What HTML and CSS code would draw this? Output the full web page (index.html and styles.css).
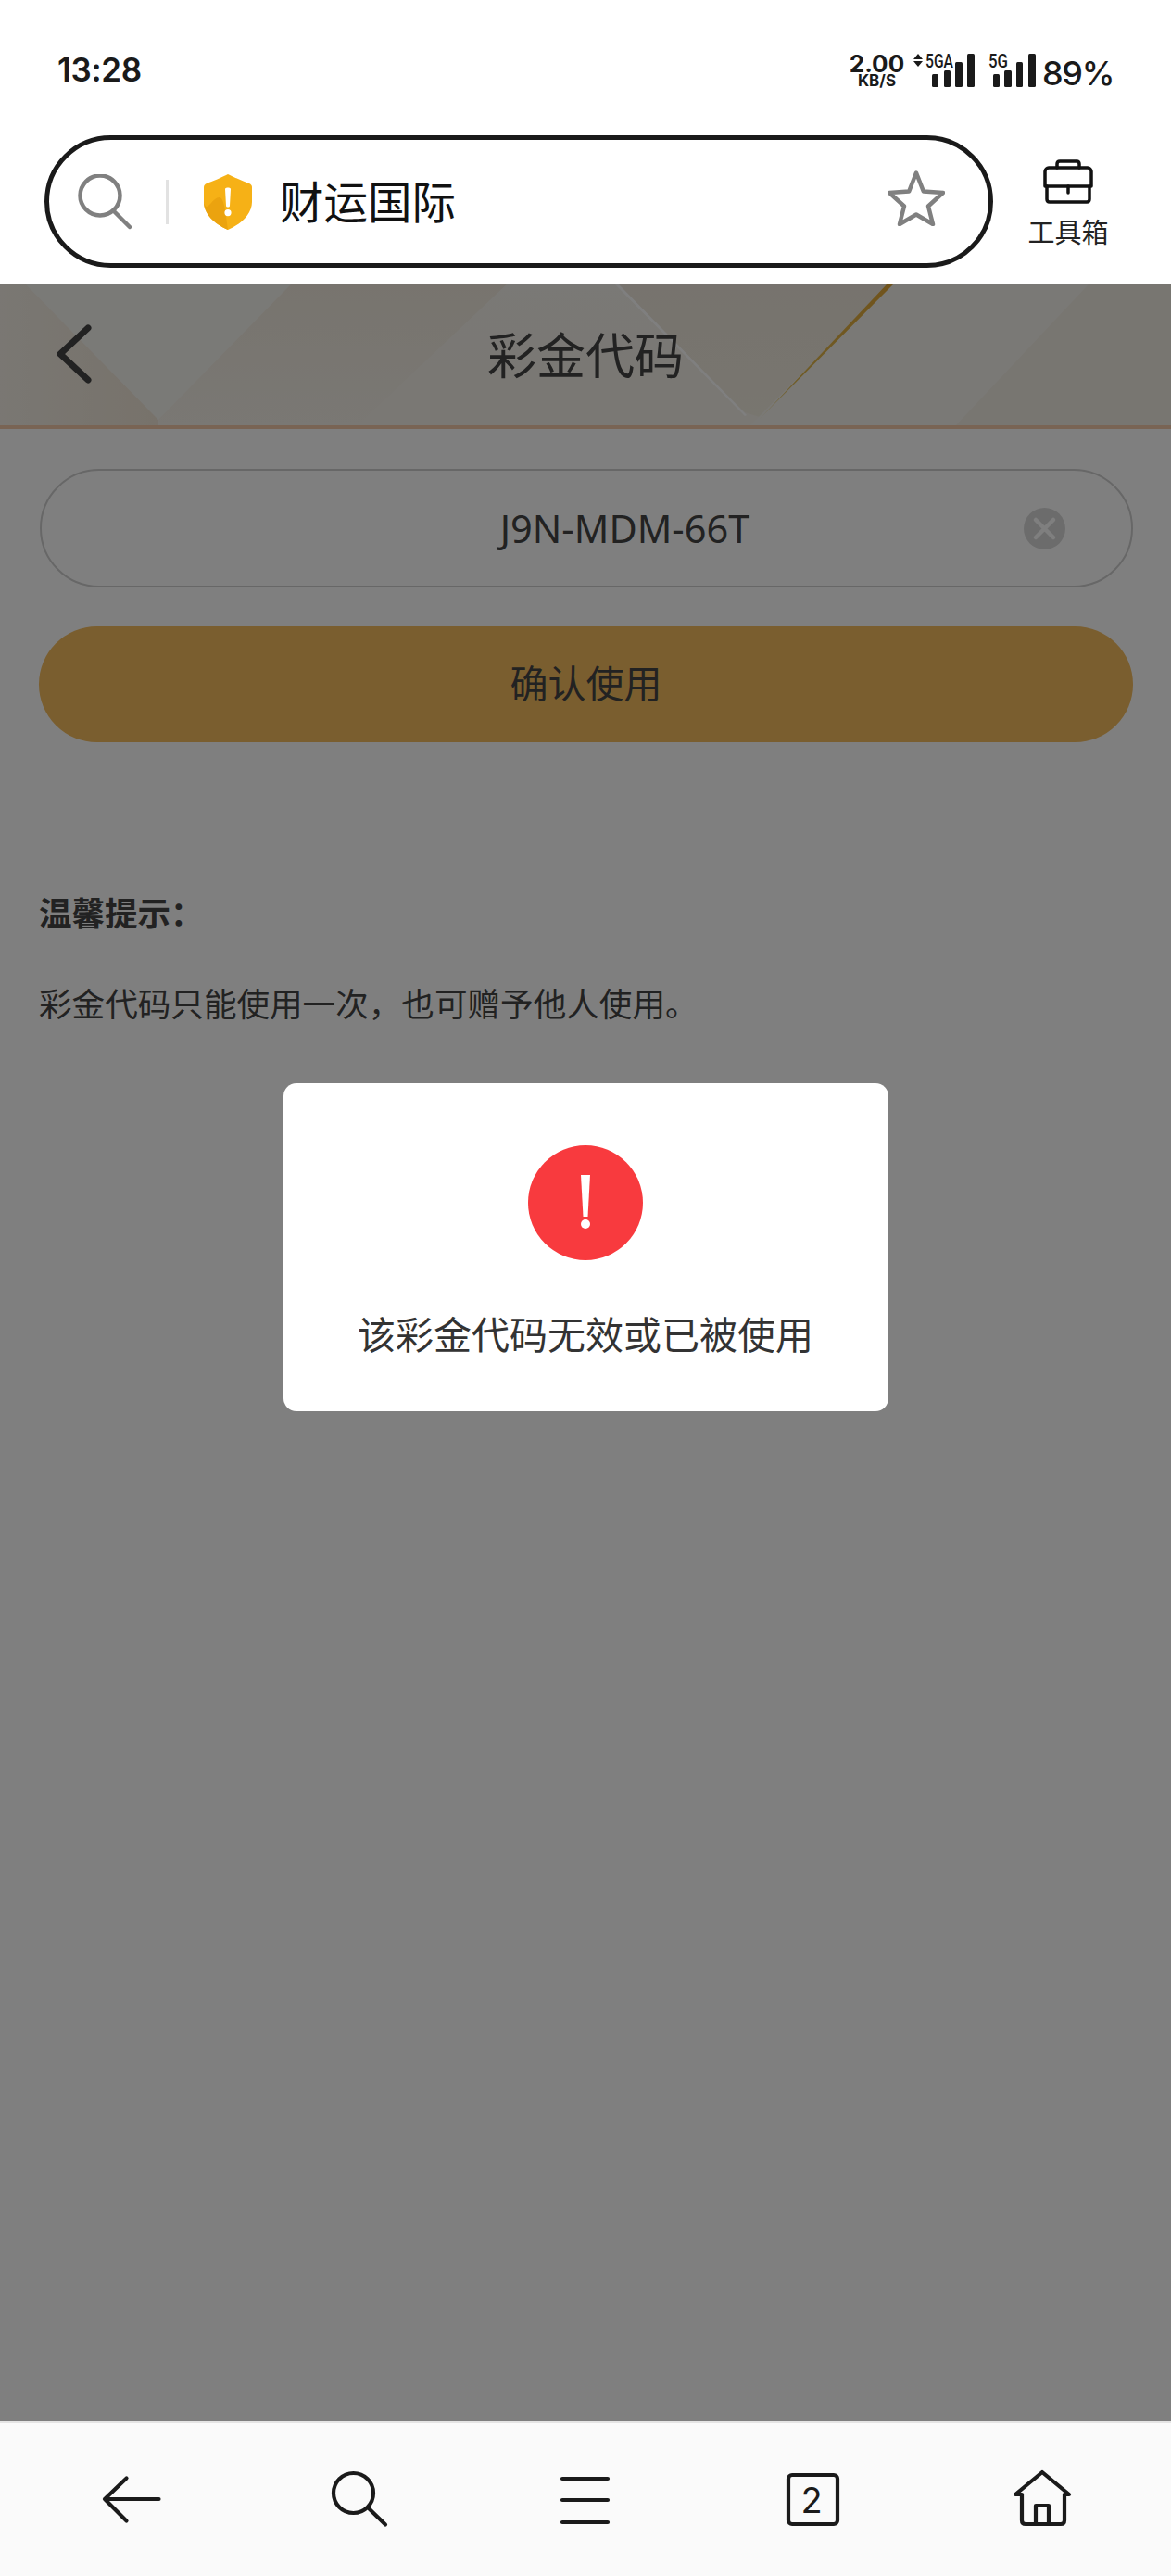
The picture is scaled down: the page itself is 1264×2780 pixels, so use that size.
FILE: index.html
```html
<!DOCTYPE html>
<html lang="zh-CN">
<head>
<meta charset="utf-8">
<title>彩金代码</title>
<link rel="stylesheet" href="styles.css">
</head>
<body>
<div class="page">
  <div class="status">
    <span class="time">13:28</span>
    <div class="status-right">
      <div class="speed"><span class="speed-val">2.00</span><span class="speed-unit">KB/S</span></div>
      <svg class="sig sig-a" width="66" height="36" viewBox="0 0 66 36">
        <path class="fill-dark" d="M5 0l5 6H0zM5 14l5-6H0z"/>
        <text class="sig-text" x="13" y="15" textLength="30" lengthAdjust="spacingAndGlyphs">5GA</text>
        <rect class="fill-dark" x="20" y="22" width="7" height="14" rx="1.5"/>
        <rect class="fill-dark" x="33" y="18" width="7" height="18" rx="1.5"/>
        <rect class="fill-dark" x="45" y="9" width="8" height="27" rx="1.5"/>
        <rect class="fill-dark" x="58" y="0" width="8" height="36" rx="1.5"/>
      </svg>
      <svg class="sig sig-b" width="51" height="36" viewBox="0 0 51 36">
        <text class="sig-text" x="0" y="15" textLength="21" lengthAdjust="spacingAndGlyphs">5G</text>
        <rect class="fill-dark" x="5" y="22" width="7" height="14" rx="1.5"/>
        <rect class="fill-dark" x="17" y="18" width="8" height="18" rx="1.5"/>
        <rect class="fill-dark" x="30" y="9" width="7" height="27" rx="1.5"/>
        <rect class="fill-dark" x="43" y="0" width="8" height="36" rx="1.5"/>
      </svg>
      <span class="battery">89%</span>
    </div>
  </div>

  <header class="browser-bar">
    <div class="search-box">
      <svg class="search-icon" width="58" height="60" viewBox="0 0 58 60"><circle class="stroke-grey" cx="24" cy="23" r="21.5"/><path class="stroke-grey" d="M39 40l17 17"/></svg>
      <span class="search-div"></span>
      <svg class="shield" width="52" height="60" viewBox="0 0 52 60">
        <path fill="#f6b116" d="M26 0C20 3 9 8 3 10 1 11 0 12 0 14v16c0 13 12 24 26 30 14-6 26-17 26-30V14c0-2-1-3-3-4C43 8 32 3 26 0z"/>
        <path fill="#eba30f" d="M26 60C12 54 0 43 0 30v-1c2 12 6 3 12-2 8-6 10 0 14 33z"/>
        <path fill="#fff" d="M23 16c0-2 6-2 6 0l-1 18c0 2-4 2-4 0zM26 38a3.600 3.600 0 1 1 0 7.200 3.600 3.600 0 0 1 0-7.200z"/>
      </svg>
      <span class="search-text">财运国际</span>
      <svg class="star" width="62" height="60" viewBox="0 0 62 60"><path class="stroke-grey" d="M31 2.500l7.800 20L60 24 44 38.500 49 58 31 47.500 13 58l5-19.500L2 24l21.200-1.500z"/></svg>
    </div>
    <div class="tool">
      <svg class="tool-icon" width="54" height="48" viewBox="0 0 54 48" fill="none" stroke="#111" stroke-width="3.500" stroke-linejoin="round" stroke-linecap="round">
        <path d="M15 9V5c0-2 1-3 3-3h18c2 0 3 1 3 3v4"/>
        <path d="M2 29V13c0-2 2-4 4-4h42c2 0 4 2 4 4v16z"/>
        <path d="M4 29v14c0 2 1 3 3 3h40c2 0 3-1 3-3V29"/>
        <path d="M27 29v7"/>
      </svg>
      <span class="tool-label">工具箱</span>
    </div>
  </header>

  <main class="main">
    <div class="banner">
      <svg class="banner-art" width="1264" height="152" viewBox="0 0 1264 152" preserveAspectRatio="none">
        <defs>
          <linearGradient id="warmL" x1="0" y1="0" x2="1" y2="0"><stop offset="0" stop-color="#f4efe6"/><stop offset="1" stop-color="#efe5d6"/></linearGradient>
          <linearGradient id="warmM" x1="0" y1="0" x2="0" y2="1"><stop offset="0" stop-color="#f0e9dd"/><stop offset="1" stop-color="#f4f0e8"/></linearGradient>
          <linearGradient id="liteM" x1="0" y1="0" x2="0" y2="1"><stop offset="0" stop-color="#f5f2ec"/><stop offset=".8" stop-color="#f4f0e8"/></linearGradient>
          <linearGradient id="warmD" x1="0" y1="0" x2="0" y2="1"><stop offset="0" stop-color="#eee7dc"/><stop offset="1" stop-color="#f1ecdf"/></linearGradient>
          <linearGradient id="gold" x1="0" y1="0" x2="0" y2="1"><stop offset="0" stop-color="#e2a838"/><stop offset=".7" stop-color="#dfb84e"/><stop offset="1" stop-color="#efe6c0"/></linearGradient>
        </defs>
        <rect width="1264" height="152" fill="#f4f0e8"/>
        <path fill="url(#warmL)" d="M0 0H28L171 146V152H0z"/>
        <path fill="#f5f4ef" d="M28 0H314L171 146z"/>
        <path fill="url(#warmM)" d="M314 0H547L386 152H171V146z"/>
        <path fill="url(#liteM)" d="M547 0H665L804 138V152H386z"/>
        <path fill="url(#warmD)" d="M665 0H961L820 143 804 138z"/>
        <path fill="#f5f3ed" d="M961 0H1175L1032 152H810z"/>
        <path fill="#f1ece3" d="M1175 0H1264V152H1032z"/>
        <path fill="#ffffff" d="M664 0H668L806 141 804 142z"/>
        <path fill="url(#gold)" d="M957 0H964L819 146z"/>
      </svg>
      <svg class="back" width="40" height="66" viewBox="0 0 40 66"><path d="M35 5L5 33l30 28" fill="none" stroke="#444" stroke-width="7" stroke-linecap="round" stroke-linejoin="round"/></svg>
      <h1 class="title">彩金代码</h1>
    </div>
    <div class="content">
      <div class="field">
        <span class="field-text">J9N-MDM-66T</span>
        <svg class="clear" width="45" height="45" viewBox="0 0 45 45"><circle cx="22.500" cy="22.500" r="22.500" fill="#d9d9d9"/><path d="M13 13l19 19M32 13L13 32" stroke="#fff" stroke-width="4.500" stroke-linecap="round"/></svg>
      </div>
      <div class="confirm"><span class="confirm-text">确认使用</span></div>
      <h2 class="hint-title">温馨提示：</h2>
      <p class="hint-body">彩金代码只能使用一次，也可赠予他人使用。</p>
    </div>
    <div class="overlay">
      <div class="dialog">
        <svg class="alert" width="124" height="124" viewBox="0 0 124 124"><circle cx="62" cy="62" r="62" fill="#f83a3e"/><path fill="#fff" d="M57 32h10l-2.500 45h-5z"/><circle cx="62" cy="85" r="5" fill="#fff"/></svg>
        <p class="dialog-text">该彩金代码无效或已被使用</p>
      </div>
    </div>
  </main>

  <nav class="navbar">
    <svg class="nav-icon" width="80" height="80" viewBox="0 0 80 80"><path d="M34.500 17.500L11 40l23.500 23.500M11 40h58.500"/></svg>
    <svg class="nav-icon" width="80" height="80" viewBox="0 0 80 80"><circle cx="33.500" cy="33.500" r="21.500"/><path d="M50 50l18 17.500"/></svg>
    <svg class="nav-icon" width="80" height="80" viewBox="0 0 80 80"><path d="M13 18h49M13 41h49M13 65h49"/></svg>
    <svg class="nav-icon" width="80" height="80" viewBox="0 0 80 80"><rect x="11" y="14" width="53" height="53" rx="4"/><text class="tab-num" x="36" y="55" text-anchor="middle">2</text></svg>
    <svg class="nav-icon" width="80" height="80" viewBox="0 0 80 80"><path d="M10 35L39 11l29 24h-5v28c0 2-1 4-4 4H21c-3 0-4-2-4-4V35z"/><path d="M32 67V47h14v20"/></svg>
  </nav>
</div>
</body>
</html>
```

FILE: styles.css
```css
* { box-sizing: border-box; }
html, body { margin: 0; padding: 0; background: #fff; }
.page {
  width: 1264px;
  height: 2780px;
  display: flex;
  flex-direction: column;
  font-family: "Noto Sans CJK SC", "Noto Sans", sans-serif;
  color: #444;
  overflow: hidden;
}
.status {
  height: 146px;
  flex: none;
  display: flex;
  justify-content: space-between;
  align-items: flex-start;
  padding: 58px 61px 0 62px;
  font-family: Inter, sans-serif;
  color: #1a1a1a;
}
.time { font-size: 35px; font-weight: 600; line-height: 34px; letter-spacing: -.3px; }
.status-right { display: flex; align-items: flex-start; }
.speed { width: 57px; display: flex; flex-direction: column; align-items: center; margin-right: 11px; font-weight: 700; }
.speed-val { font-size: 26px; line-height: 22px; white-space: nowrap; }
.speed-unit { font-size: 17px; line-height: 15px; white-space: nowrap; }
.sig { overflow: visible; }
.sig-a { margin-right: 15px; }
.sig-b { margin-right: 7px; }
.fill-dark { fill: #1a1a1a; }
.sig-text { font-family: Roboto, sans-serif; font-size: 21px; font-weight: 500; fill: #1a1a1a; }
.battery { width: 78px; font-size: 36px; font-weight: 500; line-height: 36px; margin-top: 3px; letter-spacing: -1.300px; white-space: nowrap; }

.browser-bar {
  height: 161px;
  flex: none;
  display: flex;
  align-items: flex-start;
  padding-left: 48px;
}
.search-box {
  width: 1024px;
  height: 143px;
  border: 5px solid #1a1a1a;
  border-radius: 72px;
  display: flex;
  align-items: center;
  padding: 0 47px 0 31px;
  flex: none;
}
.stroke-grey { fill: none; stroke: #808080; stroke-width: 4.500; stroke-linecap: round; stroke-linejoin: round; }
.search-div { width: 3px; height: 48px; background: #e2e2e2; margin: 0 38px 0 37px; flex: none; }
.search-text { font-size: 47.500px; line-height: 60px; color: #111; margin: -3px 0 0 30px; }
.star { margin-left: auto; margin-top: -8px; }
.tool { width: 86px; margin: 26px 0 0 38px; display: flex; flex-direction: column; align-items: center; flex: none; }
.tool-label { font-size: 29px; line-height: 40px; margin-top: 9px; color: #222; white-space: nowrap; }

.main { flex: 1; position: relative; background: #fff; display: flex; flex-direction: column; }
.banner {
  height: 156px;
  flex: none;
  position: relative;
  background: #f2c8a8;
  display: flex;
  align-items: center;
  justify-content: center;
  padding-bottom: 8px;
}
.banner-art { position: absolute; left: 0; top: 0; }
.back { position: absolute; left: 60px; top: 42px; }
.title { position: relative; margin: 0; font-size: 53px; font-weight: 400; line-height: 70px; }
.content { padding: 43px 41px 0 42px; display: flex; flex-direction: column; }
.field {
  height: 128px;
  border: 2px solid #cfcfcf;
  border-radius: 64px;
  display: flex;
  align-items: center;
  padding: 0 71px 0 199px;
  margin-left: 1px;
}
.field-text { flex: 1; text-align: center; font-family: "Noto Sans", sans-serif; font-size: 41.500px; line-height: 50px; }
.confirm {
  height: 125px;
  margin-top: 42px;
  border-radius: 63px;
  background: #f4bc5e;
  display: flex;
  align-items: center;
  justify-content: center;
  font-size: 41px;
}
.confirm-text { margin-top: -7px; }
.hint-title { margin: 159px 0 0; font-size: 35.500px; line-height: 48px; font-weight: 700; }
.hint-body { margin: 50px 0 0; font-size: 35.600px; line-height: 48px; white-space: nowrap; }

.overlay {
  position: absolute;
  inset: 0;
  background: rgba(0, 0, 0, .5);
  display: flex;
  flex-direction: column;
  align-items: center;
  padding-top: 862px;
}
.dialog {
  width: 653px;
  height: 354px;
  background: #fff;
  border-radius: 14px;
  display: flex;
  flex-direction: column;
  align-items: center;
  padding-top: 67px;
}
.dialog-text { margin: 48px 0 0; font-size: 41px; line-height: 60px; color: #333; white-space: nowrap; }

.navbar {
  height: 167px;
  flex: none;
  background: #fafafa;
  border-top: 2px solid #e4e4e4;
  display: grid;
  grid-template-columns: repeat(5, 246px);
  justify-items: center;
  padding: 42px 0 0 19px;
}
.nav-icon { fill: none; stroke: #1a1a1a; stroke-width: 4.200; stroke-linecap: round; stroke-linejoin: round; }
.tab-num { font-family: Inter, sans-serif; font-size: 38px; fill: #1a1a1a; stroke: none; }
```
